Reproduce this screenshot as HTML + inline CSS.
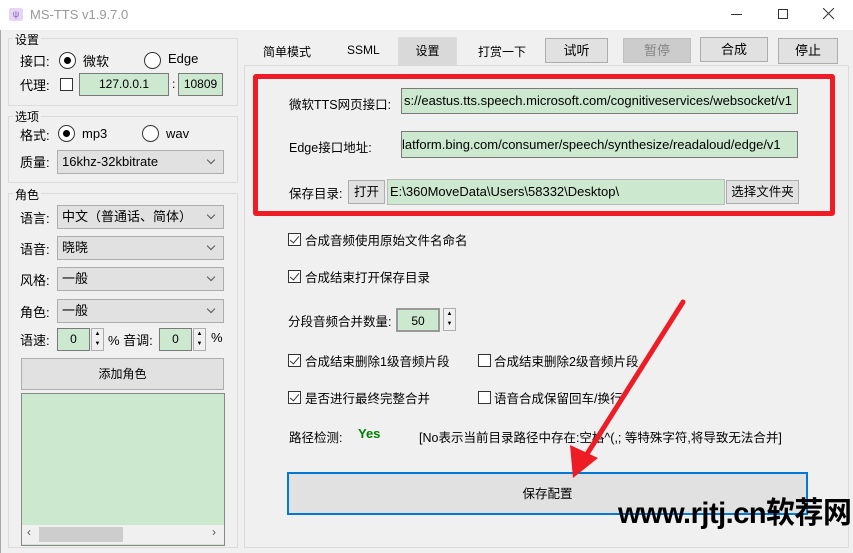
<!DOCTYPE html>
<html><head><meta charset="utf-8"><style>
*{box-sizing:border-box;margin:0;padding:0}
body{width:853px;height:553px;background:#f0f0f0;font-family:"Liberation Sans","Noto Sans CJK SC",sans-serif;font-size:12px;color:#000;position:relative;overflow:hidden}
.a{position:absolute;white-space:nowrap}
.grp{position:absolute;border:1px solid #dcdcdc}
.gl{position:absolute;background:#f0f0f0;padding:0 2px;font-size:12px}
.inp{position:absolute;background:#cce8cf;border:1px solid #7a7a7a;font-size:12px;line-height:20px}
.cb{position:absolute;background:#e1e1e1;border:1px solid #adadad;font-size:12px;line-height:21px;padding-left:4px}
.cb:after{content:"";position:absolute;right:9px;top:6px;width:5px;height:5px;border-right:1px solid #555;border-bottom:1px solid #555;transform:rotate(45deg)}
.btn{position:absolute;background:#e1e1e1;border:1px solid #adadad;text-align:center;font-size:13px}
.rad{position:absolute;width:17px;height:17px;border:1px solid #333;border-radius:50%;background:#fff}
.rad.on:after{content:"";position:absolute;left:4px;top:4px;width:7px;height:7px;border-radius:50%;background:#000}
.chk{position:absolute;width:13px;height:13px;border:1px solid #333;background:#fff}
.chk.on:after{content:"";position:absolute;left:3px;top:0px;width:4px;height:8px;border-right:1px solid #333;border-bottom:1px solid #333;transform:rotate(40deg)}
.spin{position:absolute;width:13px;border:1px solid #adadad;background:#f0f0f0}
.t{font-size:12.5px}
</style></head><body>
<div class="a" style="left:0;top:0;width:853px;height:30px;background:#fff"></div>
<div class="a" style="left:9px;top:8px;width:14px;height:13px;background:#e6d6f5;border-radius:2px;color:#8a5cc0;font-size:9px;text-align:center;line-height:13px">ψ</div>
<div class="a" style="left:30px;top:7px;font-size:13px;color:#999">MS-TTS v1.9.7.0</div>
<div class="a" style="left:731px;top:14px;width:11px;height:1px;background:#333"></div>
<div class="a" style="left:778px;top:9px;width:10px;height:10px;border:1px solid #333"></div>
<svg class="a" style="left:823px;top:8px" width="12" height="12"><path d="M0 0L11 11M11 0L0 11" stroke="#333" stroke-width="1"/></svg>
<div class="a" style="left:0;top:30px;width:1px;height:523px;background:#aaa"></div>

<div class="grp" style="left:8px;top:38px;width:230px;height:68px"></div>
<div class="gl" style="left:13px;top:31px">设置</div>
<div class="a" style="left:20px;top:51px;font-size:13px">接口:</div>
<div class="rad on" style="left:59px;top:52px"></div>
<div class="a" style="left:83px;top:51px;font-size:13px">微软</div>
<div class="rad" style="left:144px;top:52px"></div>
<div class="a" style="left:168px;top:51px;font-size:13px">Edge</div>
<div class="a" style="left:20px;top:75px;font-size:13px">代理:</div>
<div class="chk" style="left:60px;top:78px"></div>
<div class="inp" style="left:79px;top:73px;width:90px;height:23px;text-align:center">127.0.0.1</div>
<div class="a" style="left:172px;top:77px">:</div>
<div class="inp" style="left:178px;top:73px;width:45px;height:23px;text-align:center">10809</div>

<div class="grp" style="left:8px;top:116px;width:230px;height:67px"></div>
<div class="gl" style="left:13px;top:108px">选项</div>
<div class="a" style="left:20px;top:125px;font-size:13px">格式:</div>
<div class="rad on" style="left:58px;top:125px"></div>
<div class="a" style="left:82px;top:126px;font-size:13px">mp3</div>
<div class="rad" style="left:142px;top:125px"></div>
<div class="a" style="left:166px;top:126px;font-size:13px">wav</div>
<div class="a" style="left:20px;top:152px;font-size:13px">质量:</div>
<div class="cb" style="left:57px;top:150px;width:167px;height:24px;font-size:13px">16khz-32kbitrate</div>

<div class="grp" style="left:8px;top:193px;width:230px;height:355px"></div>
<div class="gl" style="left:13px;top:186px">角色</div>
<div class="a" style="left:20px;top:208px;font-size:13px">语言:</div>
<div class="cb" style="left:57px;top:205px;width:167px;height:24px;font-size:13px">中文（普通话、简体）</div>
<div class="a" style="left:20px;top:239px;font-size:13px">语音:</div>
<div class="cb" style="left:57px;top:236px;width:167px;height:24px;font-size:13px">晓晓</div>
<div class="a" style="left:20px;top:270px;font-size:13px">风格:</div>
<div class="cb" style="left:57px;top:267px;width:167px;height:24px;font-size:13px">一般</div>
<div class="a" style="left:20px;top:302px;font-size:13px">角色:</div>
<div class="cb" style="left:57px;top:299px;width:167px;height:24px;font-size:13px">一般</div>
<div class="a" style="left:20px;top:330px;font-size:13px">语速:</div>
<div class="inp" style="left:57px;top:328px;width:33px;height:23px;text-align:center">0</div>
<div class="spin" style="left:91px;top:328px;height:23px;font-size:6px;text-align:center;line-height:10px">▲<br>▼</div>
<div class="a" style="left:108px;top:330px;font-size:13px">% 音调:</div>
<div class="inp" style="left:159px;top:328px;width:33px;height:23px;text-align:center">0</div>
<div class="spin" style="left:193px;top:328px;height:23px;font-size:6px;text-align:center;line-height:10px">▲<br>▼</div>
<div class="a" style="left:211px;top:330px;font-size:13px">%</div>
<div class="btn" style="left:21px;top:358px;width:203px;height:32px;line-height:30px;font-size:12px">添加角色</div>
<div class="a" style="left:21px;top:393px;width:204px;height:153px;background:#cce8cf;border:1px solid #888"></div>
<div class="a" style="left:22px;top:525px;width:202px;height:19px;background:#f0f0f0"></div>
<div class="a" style="left:39px;top:527px;width:84px;height:15px;background:#cdcdcd"></div>
<div class="a" style="left:27px;top:525px;color:#555;font-size:12px">‹</div>
<div class="a" style="left:212px;top:525px;color:#555;font-size:12px">›</div>

<div class="a" style="left:244px;top:65px;width:605px;height:483px;border:1px solid #dcdcdc;background:#f0f0f0"></div>
<div class="a" style="left:263px;top:43px">简单模式</div>
<div class="a" style="left:347px;top:43px">SSML</div>
<div class="a" style="left:398px;top:37px;width:59px;height:29px;background:#d9d9d9;border:1px solid #dcdcdc;border-bottom:none;text-align:center;line-height:27px">设置</div>
<div class="a" style="left:478px;top:43px">打赏一下</div>
<div class="btn" style="left:545px;top:38px;width:63px;height:25px;line-height:23px">试听</div>
<div class="btn" style="left:623px;top:38px;width:68px;height:25px;line-height:23px;background:#ccc;border-color:#bfbfbf;color:#838383">暂停</div>
<div class="btn" style="left:700px;top:37px;width:68px;height:25px;line-height:23px">合成</div>
<div class="btn" style="left:778px;top:38px;width:60px;height:26px;line-height:24px">停止</div>

<div class="a" style="left:253px;top:74px;width:582px;height:142px;border:5px solid #ee1c25;border-radius:3px"></div>
<div class="a t" style="left:289px;top:94px">微软TTS网页接口:</div>
<div class="inp" style="left:401px;top:88px;width:397px;height:26px;line-height:24px;padding-left:2px;font-size:13px;overflow:hidden">s://eastus.tts.speech.microsoft.com/cognitiveservices/websocket/v1</div>
<div class="a t" style="left:289px;top:137px">Edge接口地址:</div>
<div class="inp" style="left:401px;top:131px;width:397px;height:27px;line-height:25px;font-size:13px;overflow:hidden">latform.bing.com/consumer/speech/synthesize/readaloud/edge/v1</div>
<div class="a t" style="left:289px;top:183px">保存目录:</div>
<div class="btn" style="left:348px;top:180px;width:37px;height:24px;line-height:22px;font-size:12.5px">打开</div>
<div class="inp" style="left:387px;top:179px;width:338px;height:26px;line-height:24px;padding-left:2px;border-color:#bbb;font-size:13px">E:\360MoveData\Users\58332\Desktop\</div>
<div class="btn" style="left:726px;top:180px;width:73px;height:24px;line-height:22px;font-size:12.5px">选择文件夹</div>

<div class="chk on" style="left:288px;top:233px"></div><div class="a t" style="left:305px;top:230px">合成音频使用原始文件名命名</div>
<div class="chk on" style="left:288px;top:270px"></div><div class="a t" style="left:305px;top:267px">合成结束打开保存目录</div>
<div class="a t" style="left:288px;top:311px">分段音频合并数量:</div>
<div class="inp" style="left:396px;top:308px;width:44px;height:24px;text-align:center;line-height:22px;border-width:2px;border-color:#999">50</div>
<div class="spin" style="left:443px;top:308px;height:23px;font-size:6px;text-align:center;line-height:10px">▲<br>▼</div>
<div class="chk on" style="left:288px;top:354px"></div><div class="a t" style="left:305px;top:351px">合成结束删除1级音频片段</div>
<div class="chk" style="left:478px;top:354px"></div><div class="a t" style="left:494px;top:351px">合成结束删除2级音频片段</div>
<div class="chk on" style="left:288px;top:391px"></div><div class="a t" style="left:305px;top:388px">是否进行最终完整合并</div>
<div class="chk" style="left:478px;top:391px"></div><div class="a t" style="left:494px;top:388px">语音合成保留回车/换行</div>
<div class="a t" style="left:289px;top:427px">路径检测:</div>
<div class="a" style="left:358px;top:426px;color:#008000;font-weight:bold;font-size:13px">Yes</div>
<div class="a t" style="left:419px;top:427px">[No表示当前目录路径中存在:空格^(,; 等特殊字符,将导致无法合并]</div>
<div class="a t" style="left:287px;top:472px;width:521px;height:43px;background:#e1e1e1;border:2px solid #0078d7;text-align:center;line-height:40px">保存配置</div>

<svg class="a" style="left:0;top:0" width="853" height="553">
<line x1="683" y1="302" x2="582" y2="462" stroke="#ee1c25" stroke-width="5" stroke-linecap="round"/>
<polygon points="573,478 570,445 598,458" fill="#ee1c25"/>
</svg>
<div class="a" style="left:618px;top:488px;font-size:30px;font-weight:bold;color:#000;transform:scaleX(0.965);transform-origin:0 0;letter-spacing:-0.5px">www.rjtj.cn软荐网</div>
</body></html>
